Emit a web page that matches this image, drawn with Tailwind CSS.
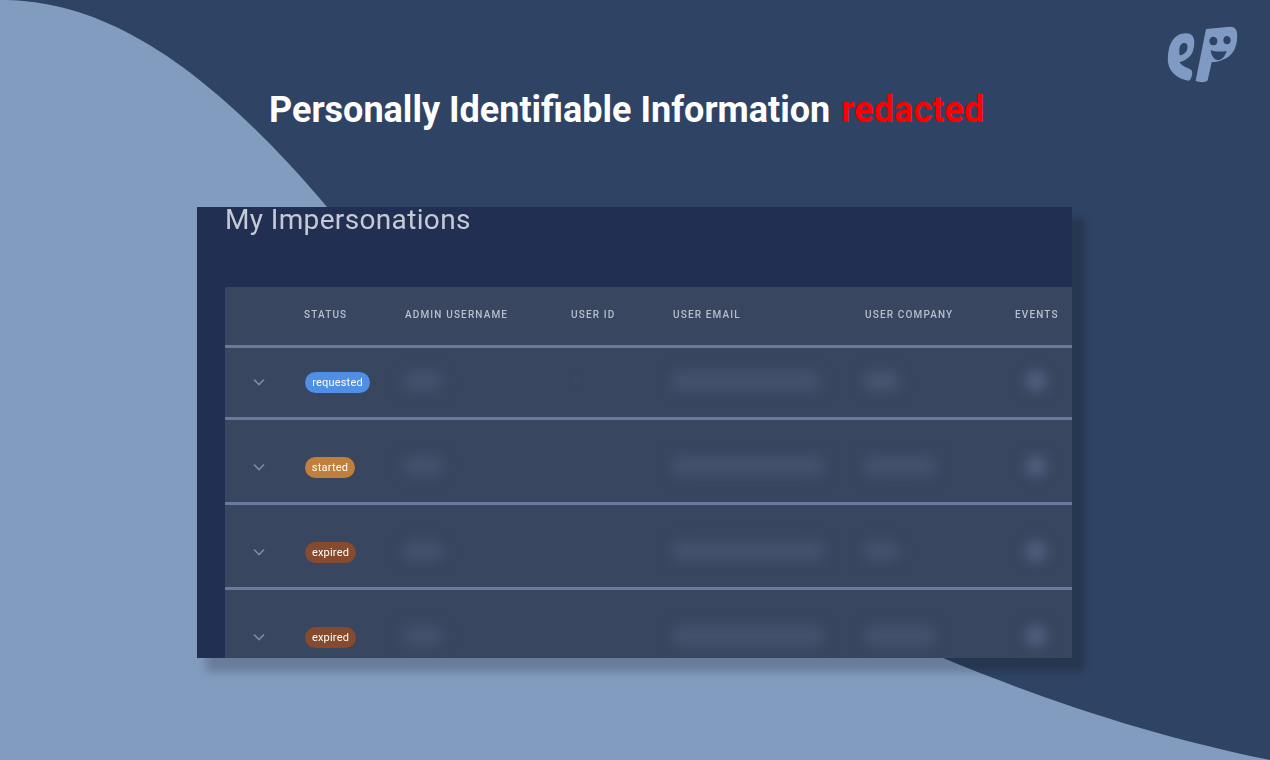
<!DOCTYPE html>
<html lang="en">
<head>
  <meta charset="UTF-8" />
  <meta name="viewport" content="width=device-width, initial-scale=1.0"/>
  <title>Personally Identifiable Information redacted</title>
  <script src="https://cdn.jsdelivr.net/npm/@tailwindcss/browser@4"></script>
</head>
<body class="bg-[#2f4465] font-['Roboto',sans-serif] overflow-hidden">
<div class="relative w-[1270px] h-[760px] overflow-hidden">

  <!-- background curve -->
  <svg class="absolute inset-0" width="1270" height="760" viewBox="0 0 1270 760">
    <path d="M0 0 C90 0 190 45 327 207 L943 658 C1050 702 1150 735 1270 760 L0 760 Z" fill="#829cc0"/>
  </svg>

  <!-- logo -->
  <svg class="absolute left-[1150px] top-[15px]" width="100" height="75" viewBox="0 0 300 225">
    <path fill-rule="evenodd" fill="#7f9bc3" d="M55 112 C60 75 80 56 105 55 C128 54 136 68 132 94 C129 118 118 132 89 142 C92 150 106 156 124 165 C130 172 125 194 116 197 C88 194 58 174 54 142 C53 132 54 122 55 112 Z M88 105 C88 92 95 84 103 84 C111 84 114 92 112 101 C110 113 98 120 90 121 C88 118 88 112 88 105 Z"/>
    <path fill-rule="evenodd" fill="#7f9bc3" d="M168 42 L240 35 C258 35 264 48 261 74 C257 112 238 136 185 142 L173 196 C170 203 148 203 137 197 Z M178 78 C178 86 183 91 190 91 C198 91 203 85 202 76 C201 69 196 65 190 65 C183 65 178 70 178 78 Z M220 75 C220 83 225 88 231 88 C238 88 243 82 242 74 C241 67 236 63 231 63 C225 63 220 68 220 75 Z M182 105 C195 111 216 111 230 107 C226 123 215 135 203 135 C192 135 184 122 182 105 Z"/>
  </svg>

  <div class="relative flex flex-col">
    <h1 class="h-[207px] pt-[88px] pl-[269px] text-[36px] leading-[44px] font-bold text-white whitespace-nowrap">Personally Identifiable Information <span class="ml-[2px] tracking-[0.1px] text-[#ff0000]">redacted</span></h1>

    <!-- screenshot window -->
    <div class="ml-[197px] w-[875px] h-[451px] bg-[#212f53] shadow-[11px_12px_8px_2px_rgba(0,0,0,0.2)] overflow-hidden pl-7">
      <h2 class="h-[80px] pt-px text-[28px] leading-[24px] tracking-[0.35px] text-[#c5cad5] blur-[0.4px]">My Impersonations</h2>

      <div class="bg-[#39465f] rounded-t-[3px] w-[900px]">
        <!-- header -->
        <div class="grid grid-cols-[79px_101px_166px_102px_192px_150px_1fr] items-center h-[54px] pb-1 text-[10px] font-medium tracking-[1.15px] text-[#b8bfcc] blur-[0.4px] border-b-[3px] border-[#6a7a9f] box-content">
          <span></span>
          <span>STATUS</span>
          <span>ADMIN USERNAME</span>
          <span>USER ID</span>
          <span>USER EMAIL</span>
          <span>USER COMPANY</span>
          <span>EVENTS</span>
        </div>

        <!-- row 1 -->
        <div class="grid grid-cols-[79px_101px_166px_102px_192px_150px_1fr] items-center h-[69px] border-b-[3px] border-[#6a7a9f] box-content">
          <svg class="ml-7 mb-0.5 blur-[0.4px]" width="12" height="8" viewBox="0 0 12 8"><path d="M1 1.5 L6 6.5 L11 1.5" fill="none" stroke="#7d8aa8" stroke-width="1.6"/></svg>
          <span class="ml-px w-[65px] h-[21px] rounded-full bg-[#4f8fe6] text-white text-[11px] tracking-[0.2px] leading-[21px] text-center blur-[0.4px]">requested</span>
          <span class="mb-1 w-[36px] h-[16px] bg-[#475470] blur-[7px]"></span>
          <span class="mb-1 ml-1 w-[3px] h-[3px] bg-[#475470] blur-[2px]"></span>
          <span class="mb-1 w-[146px] h-[16px] bg-[#475470] blur-[7px]"></span>
          <span class="mb-1 w-[32px] h-[16px] bg-[#4c5974] blur-[7px]"></span>
          <span class="mb-1 ml-[10px] w-[22px] h-[22px] rounded-full bg-[#4f5d7c] blur-[6px]"></span>
        </div>

        <!-- row 2 -->
        <div class="grid grid-cols-[79px_101px_166px_102px_192px_150px_1fr] items-center h-[69px] pt-[13px] border-b-[3px] border-[#6a7a9f] box-content">
          <svg class="ml-7 mb-0.5 blur-[0.4px]" width="12" height="8" viewBox="0 0 12 8"><path d="M1 1.5 L6 6.5 L11 1.5" fill="none" stroke="#7d8aa8" stroke-width="1.6"/></svg>
          <span class="ml-px w-[50px] h-[21px] rounded-full bg-[#c07f3a] text-white text-[11px] tracking-[0.2px] leading-[21px] text-center blur-[0.4px]">started</span>
          <span class="mb-1 w-[36px] h-[16px] bg-[#475470] blur-[7px]"></span>
          <span></span>
          <span class="mb-1 w-[150px] h-[16px] bg-[#475470] blur-[7px]"></span>
          <span class="mb-1 w-[70px] h-[16px] bg-[#475470] blur-[7px]"></span>
          <span class="mb-1 ml-[10px] w-[22px] h-[22px] rounded-full bg-[#4f5d7c] blur-[6px]"></span>
        </div>

        <!-- row 3 -->
        <div class="grid grid-cols-[79px_101px_166px_102px_192px_150px_1fr] items-center h-[69px] pt-[13px] border-b-[3px] border-[#6a7a9f] box-content">
          <svg class="ml-7 mb-0.5 blur-[0.4px]" width="12" height="8" viewBox="0 0 12 8"><path d="M1 1.5 L6 6.5 L11 1.5" fill="none" stroke="#7d8aa8" stroke-width="1.6"/></svg>
          <span class="ml-px w-[51px] h-[21px] rounded-full bg-[#864a2e] text-white text-[11px] tracking-[0.2px] leading-[21px] text-center blur-[0.4px]">expired</span>
          <span class="mb-1 w-[36px] h-[16px] bg-[#475470] blur-[7px]"></span>
          <span></span>
          <span class="mb-1 w-[150px] h-[16px] bg-[#475470] blur-[7px]"></span>
          <span class="mb-1 w-[32px] h-[16px] bg-[#475470] blur-[7px]"></span>
          <span class="mb-1 ml-[10px] w-[22px] h-[22px] rounded-full bg-[#4f5d7c] blur-[6px]"></span>
        </div>

        <!-- row 4 -->
        <div class="grid grid-cols-[79px_101px_166px_102px_192px_150px_1fr] items-center h-[69px] pt-[13px] box-content">
          <svg class="ml-7 mb-0.5 blur-[0.4px]" width="12" height="8" viewBox="0 0 12 8"><path d="M1 1.5 L6 6.5 L11 1.5" fill="none" stroke="#7d8aa8" stroke-width="1.6"/></svg>
          <span class="ml-px w-[51px] h-[21px] rounded-full bg-[#864a2e] text-white text-[11px] tracking-[0.2px] leading-[21px] text-center blur-[0.4px]">expired</span>
          <span class="mb-1 w-[36px] h-[16px] bg-[#475470] blur-[7px]"></span>
          <span></span>
          <span class="mb-1 w-[150px] h-[16px] bg-[#475470] blur-[7px]"></span>
          <span class="mb-1 w-[70px] h-[16px] bg-[#475470] blur-[7px]"></span>
          <span class="mb-1 ml-[10px] w-[22px] h-[22px] rounded-full bg-[#4f5d7c] blur-[6px]"></span>
        </div>
      </div>
    </div>
  </div>
</div>
</body>
</html>
